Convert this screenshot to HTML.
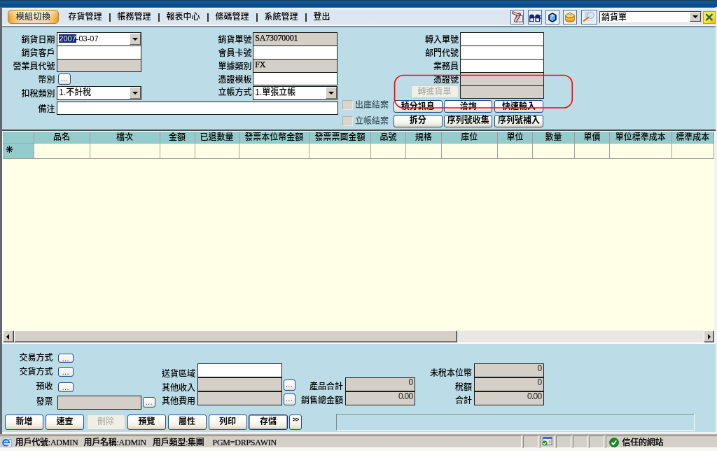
<!DOCTYPE html>
<html lang="zh-Hant">
<head>
<meta charset="utf-8">
<title>銷貨單</title>
<style>
html,body{margin:0;padding:0;}
body{width:717px;height:451px;overflow:hidden;background:#bcdde7;position:relative;}
#app{position:absolute;left:0;top:0;width:1024px;height:644px;transform:scale(0.7002);transform-origin:0 0;will-change:transform;
  font-family:"Liberation Sans","Noto Sans CJK TC",sans-serif;font-size:12px;color:#000;background:#bcdde7;overflow:hidden;font-weight:500;}
#app *{box-sizing:border-box;}
.abs{position:absolute;}
/* chrome */
#topbar{left:0;top:0;width:1024px;height:10.7px;background:linear-gradient(#1d3f5e 0,#1d3f5e 1.4px,#0a60aa 1.6px,#0a5698 4.5px,#0a4a86 7.5px,#0b4f8c 9.3px,#1a62a4 10.7px);}
#toolbar{left:0;top:10.7px;width:1024px;height:27.3px;background:linear-gradient(#f4f7fc 0,#eef3f9 1.6px,#dde7f1 3.2px,#dbe6f0 6px,#dce7f1 23.5px,#f2f6fa 25.2px,#f6f9fb 27.3px);}
#tbline{left:0;top:37.3px;width:1024px;height:1.8px;background:#768e98;}
#lborder{left:0;top:10px;width:2.5px;height:610px;background:#62666e;}
#rborder{left:1022.2px;top:10px;width:1.8px;height:610px;background:#eef0f0;}
.menu{top:17px;height:14px;line-height:14px;white-space:nowrap;}
.sep{top:16.5px;height:14px;line-height:14px;width:6px;text-align:center;font-weight:700;font-size:12.5px;}
#modbtn{left:11px;top:14.2px;width:73px;height:20.2px;border:1.3px solid #b4822e;border-radius:5px;
  background:linear-gradient(rgba(255,255,255,.35),rgba(255,255,255,0) 50%,rgba(160,110,30,.12)),linear-gradient(90deg,#f4a01a 0,#f8c468 10%,#f6e5c6 26%,#f6e5c6 74%,#f8c468 90%,#f4a01a 100%);
  text-align:center;line-height:18px;font-size:12px;letter-spacing:0.4px;color:#333;}
/* form */
.lbl{height:19px;line-height:19px;margin-top:1.5px;text-align:right;white-space:nowrap;}
.fld{height:20.6px;border:1.6px solid #1c1c1c;background:#fff;line-height:15px;padding-left:2px;white-space:nowrap;overflow:hidden;}
.ro{background:#d4d0c8;}
.num{text-align:right;padding-right:2.5px;font-size:12px;letter-spacing:-0.7px;line-height:13px;color:#111;}
.serif{font-family:"Liberation Serif","Noto Serif CJK SC",serif;font-size:12px;letter-spacing:-0.25px;-webkit-text-stroke:0.25px #000;}
.sel{height:20.6px;border:1.6px solid #1c1c1c;background:#fff;line-height:16px;padding-left:2px;white-space:nowrap;overflow:hidden;font-size:12px;}
.sel .dd{position:absolute;right:0;top:0;width:16.5px;height:17.5px;background:#d4d0c8;border:1px solid;border-color:#fff #606060 #606060 #fff;}
.sel .dd:after{content:"";position:absolute;left:3px;top:6px;border:4.2px solid transparent;border-top:4.6px solid #000;border-bottom:0;}
.dots{border:1.3px solid #1f508f;border-radius:3px;background:linear-gradient(#fff,#f1efe6 80%,#dcd8cc);text-align:center;line-height:12px;font-size:11px;letter-spacing:0.3px;color:#445;}
.btn{border:1.4px solid #1f508f;border-radius:3px;background:linear-gradient(#fff,#fbfaf4 45%,#f0ede0 78%,#d8d2c0);font-weight:700;text-align:center;white-space:nowrap;}
.btn.dis{color:#a8a8a0;border-color:#d0d0c4;background:#f0efe6;}
.chk{width:15.4px;height:14px;background:#d9d5cd;border:1.2px solid;border-color:#b4b0a8 #ece9e2 #ece9e2 #b4b0a8;}
.gray{color:#3c5560;}
/* grid */
#grid{left:2.5px;top:184.8px;width:1019.7px;height:304.5px;background:#ffffe8;border-top:2px solid #484848;}
.gh{top:188.4px;height:16.2px;background:#94cccb;line-height:16.5px;text-align:center;border-right:1px solid #a898a0;border-bottom:1px solid #86aeb0;white-space:nowrap;overflow:hidden;}
.gc{top:204.6px;height:22px;background:#ffffe8;border-right:1px solid #a4a49c;border-bottom:1.2px solid #9c9c96;}

.sbtn{background:#d4d0c8;border:1.3px solid;border-color:#fff #404040 #404040 #fff;box-shadow:inset -1px -1px 0 #8a8780;}
.sbtn i{position:absolute;top:3.2px;width:0;height:0;border-top:4px solid transparent;border-bottom:4px solid transparent;}
.bb{top:591.8px;width:55px;height:22px;line-height:19px;font-weight:700;}
.btn.dis{font-weight:400;}
.st{top:623.5px;height:16px;line-height:16px;white-space:nowrap;letter-spacing:-0.25px;-webkit-text-stroke:0.2px #000;font-family:"Liberation Serif","Noto Sans CJK TC",serif;}

.ibox{top:14.4px;width:19.8px;height:20.3px;border:1.3px solid #4476aa;background:#eaf1f9;}
.ibox svg{position:absolute;left:0;top:0;}
.pnl{top:621.8px;height:18px;border:1px solid;border-color:#8a8880 #fff #fff #8a8880;}
</style>
</head>
<body>
<div id="app">
  <div id="topbar" class="abs"></div>
  <div id="toolbar" class="abs"></div>
  <div id="tbline" class="abs"></div>
  <div id="modbtn" class="abs">模組切換</div>
  <div class="abs menu" style="left:97.5px">存貨管理</div>
  <div class="abs sep" style="left:154px">|</div>
  <div class="abs menu" style="left:167.5px">帳務管理</div>
  <div class="abs sep" style="left:224px">|</div>
  <div class="abs menu" style="left:237.5px">報表中心</div>
  <div class="abs sep" style="left:294px">|</div>
  <div class="abs menu" style="left:307.5px">條碼管理</div>
  <div class="abs sep" style="left:364px">|</div>
  <div class="abs menu" style="left:377.5px">系統管理</div>
  <div class="abs sep" style="left:434px">|</div>
  <div class="abs menu" style="left:447.5px">登出</div>

  <div class="abs ibox" style="left:728.5px"><svg viewBox="0 0 20 20" width="18" height="18"><rect x="8" y="8" width="10" height="10" fill="#fff" stroke="#4a4a4a" stroke-width="1.1"/><path d="M10.5 12h5M10.5 15h5" stroke="#8a8a8a" stroke-width="1"/><path d="M13.2 6 L7 16.4" stroke="#6a1c24" stroke-width="5" stroke-linecap="round"/><path d="M13.2 6 L7 16.4" stroke="#f4b4b8" stroke-width="3" stroke-linecap="round"/><path d="M3 3.5 L11.5 7" stroke="#6a1c24" stroke-width="4.2" stroke-linecap="round"/><path d="M3 3.5 L11.5 7" stroke="#f8dcdc" stroke-width="2.2" stroke-linecap="round"/></svg></div>
  <div class="abs ibox" style="left:753.8px"><svg viewBox="0 0 20 20" width="18" height="18"><path d="M1.2 18 V9.5 Q1.2 6 5 6 Q8.8 6 8.8 9.5 V18 Z" fill="#18207c"/><path d="M10.4 18 V9.5 Q10.4 6 14.2 6 Q18 6 18 9.5 V18 Z" fill="#18207c"/><rect x="2.8" y="12.6" width="4.4" height="4.2" fill="#fff"/><rect x="12" y="12.6" width="4.4" height="4.2" fill="#fff"/><rect x="1.2" y="9.6" width="17" height="1.8" fill="#18207c"/><path d="M17.5 8h3M17.5 10.5h3M17.5 13h3" stroke="#18207c" stroke-width="1"/></svg></div>
  <div class="abs ibox" style="left:778.8px"><svg viewBox="0 0 20 20" width="18" height="18"><path d="M10 4.4 L15.4 7.6 V14.6 L10 18 L4.6 14.6 V7.6 Z" fill="#48a6f4" stroke="#0c1838" stroke-width="2" stroke-linejoin="round"/><path d="M10 5.4 L14.4 8 L10 10.4 L5.6 8Z" fill="#9ad6ff"/><path d="M10 10.4 V16.8 L5.6 14 V8Z" fill="#6cc0fa"/></svg></div>
  <div class="abs ibox" style="left:804px"><svg viewBox="0 0 20 20" width="18" height="18"><path d="M3 8 V15 Q3 18 10 18 Q17 18 17 15 V8 Z" fill="#f0a010" stroke="#9a5a00" stroke-width="1"/><ellipse cx="10" cy="8" rx="7" ry="3.2" fill="#f8d870" stroke="#9a5a00" stroke-width="1"/><path d="M3 12 Q10 15.5 17 12" fill="none" stroke="#f8e090" stroke-width="1"/><circle cx="10" cy="5" r="2" fill="#c8d8a0" stroke="#666" stroke-width=".6"/></svg></div>
  <div class="abs ibox" style="left:830px;width:22.5px"><svg viewBox="0 0 22 20" width="20" height="18"><rect x="4" y="2" width="8" height="9" fill="#c8d4e8"/><circle cx="14" cy="7.5" r="5.2" fill="#cfe6fa" stroke="#a8b8d0" stroke-width="1.4"/><path d="M10 11 L3 16.5" stroke="#e87010" stroke-width="2.6" stroke-linecap="round"/><path d="M8 16h10" stroke="#d8d8e0" stroke-width="1.5"/></svg></div>
  <div class="abs" style="left:855.5px;top:15.7px;width:146px;height:17.2px;border:1.5px solid;border-color:#3a3a3a #dcdad4 #e4e2dc #3a3a3a;background:#fff;line-height:17px;padding-left:2.5px;font-size:12px;white-space:nowrap;overflow:hidden">銷貨單<span style="position:absolute;right:0;top:0;width:15.5px;height:14.4px;background:#d4d0c8;border:1px solid;border-color:#f4f4f0 #404040 #404040 #f4f4f0"></span><span style="position:absolute;right:3.4px;top:5px;border:4.2px solid transparent;border-top:4.5px solid #000;border-bottom:0"></span></div>
  <div class="abs" style="left:1004.2px;top:16.4px;width:17.8px;height:17.2px;background:linear-gradient(135deg,#fff040 0,#ffec20 55%,#f8b018 100%);border:1px solid #c89a28"><svg viewBox="0 0 16 15" width="15.8" height="15.2" style="position:absolute;left:0;top:0"><path d="M3.4 3 L12.6 12 M12.6 3 L3.4 12" stroke="#1c6870" stroke-width="2.4"/></svg></div>


  <!-- column 1 -->
  <div class="abs lbl" style="left:0;top:46px;width:78.5px">銷貨日期</div>
  <div class="abs sel" style="left:81.3px;top:45.5px;width:121.2px"><span style="font-size:11px"><span style="background:#0a246a;color:#fff">2007</span>-03-07</span><span class="dd"></span></div>
  <div class="abs lbl" style="left:0;top:65px;width:78.5px">銷貨客戶</div>
  <div class="abs fld" style="left:81.3px;top:64.5px;width:121.2px"></div>
  <div class="abs lbl" style="left:0;top:84px;width:78.5px">營業員代號</div>
  <div class="abs fld ro" style="left:81.3px;top:83.5px;width:121.2px;height:19.5px"></div>
  <div class="abs lbl" style="left:0;top:103px;width:78.5px">幣別</div>
  <div class="abs dots" style="left:83px;top:105px;width:18px;height:15.5px">...</div>
  <div class="abs lbl" style="left:0;top:123px;width:78.5px">扣稅類別</div>
  <div class="abs sel" style="left:81.3px;top:122.5px;width:121.2px;height:20px">1.不計稅<span class="dd"></span></div>
  <div class="abs lbl" style="left:0;top:145px;width:78.5px">備注</div>
  <div class="abs fld" style="left:81.3px;top:144.5px;width:401.5px;height:19.5px"></div>
  <!-- column 2 -->
  <div class="abs lbl" style="left:280px;top:46px;width:79.5px">銷貨單號</div>
  <div class="abs fld ro serif" style="left:361.3px;top:45.5px;width:121.2px">SA73070001</div>
  <div class="abs lbl" style="left:280px;top:65px;width:79.5px">會員卡號</div>
  <div class="abs fld" style="left:361.3px;top:64.5px;width:121.2px"></div>
  <div class="abs lbl" style="left:280px;top:84px;width:79.5px">單據類別</div>
  <div class="abs fld ro serif" style="left:361.3px;top:83.5px;width:121.2px">FX</div>
  <div class="abs lbl" style="left:280px;top:103px;width:79.5px">憑證模板</div>
  <div class="abs fld" style="left:361.3px;top:102.5px;width:121.2px;height:19.5px"></div>
  <div class="abs lbl" style="left:280px;top:121px;width:79.5px">立帳方式</div>
  <div class="abs sel" style="left:361.3px;top:122.5px;width:121.2px;height:20px">1.單張立帳<span class="dd"></span></div>
  <div class="abs chk" style="left:488.5px;top:142.8px"></div>
  <div class="abs lbl gray" style="left:507px;top:139.8px;text-align:left">出庫結案</div>
  <div class="abs chk" style="left:488.5px;top:165.8px"></div>
  <div class="abs lbl gray" style="left:507px;top:162.6px;text-align:left">立帳結案</div>
  <!-- column 3 -->
  <div class="abs lbl" style="left:575px;top:46px;width:80px">轉入單號</div>
  <div class="abs fld" style="left:657.2px;top:45.5px;width:119.5px"></div>
  <div class="abs lbl" style="left:575px;top:65px;width:80px">部門代號</div>
  <div class="abs fld" style="left:657.2px;top:64.5px;width:119.5px"></div>
  <div class="abs lbl" style="left:575px;top:84px;width:80px">業務員</div>
  <div class="abs fld" style="left:657.2px;top:83.5px;width:119.5px"></div>
  <div class="abs lbl" style="left:575px;top:103px;width:80px">憑證號</div>
  <div class="abs fld ro" style="left:657.2px;top:102.5px;width:119.5px"></div>
  <div class="abs btn dis" style="left:586.5px;top:121.5px;width:68px;height:18px;line-height:16px">轉進貨單</div>
  <div class="abs fld ro" style="left:657.2px;top:121.5px;width:119.5px;height:19px"></div>
  <div class="abs btn" style="left:561.8px;top:142.6px;width:70px;height:18px;line-height:16px">積分訊息</div>
  <div class="abs btn" style="left:634.3px;top:142.6px;width:68.7px;height:18px;line-height:16px">洽詢</div>
  <div class="abs btn" style="left:705.8px;top:142.6px;width:70.2px;height:18px;line-height:16px">快速輸入</div>
  <div class="abs btn" style="left:561.8px;top:164px;width:70px;height:17.5px;line-height:15.5px">拆分</div>
  <div class="abs btn" style="left:634.3px;top:164px;width:68.7px;height:17.5px;line-height:15.5px">序列號收集</div>
  <div class="abs btn" style="left:705.8px;top:164px;width:70.2px;height:17.5px;line-height:15.5px">序列號補入</div>
  <svg class="abs" style="left:558px;top:102px;overflow:visible" width="270" height="56"><rect x="5.6" y="5.5" width="253.7" height="46.5" rx="12.5" ry="12.5" fill="none" stroke="#f80a0a" stroke-width="1.7"/></svg>

  <div id="grid" class="abs"></div>
  <div class="abs" style="left:2.5px;top:186.8px;width:1019px;height:1.7px;background:#fff"></div>
  <div class="abs" style="left:2.8px;top:186.8px;width:1.4px;height:302px;background:#fff"></div>
  <div class="abs gh" style="left:4px;width:44.5px"></div>
  <div class="abs gc" style="left:4px;width:44.5px;background:#94cccb;line-height:18px;padding-left:3.5px;font-size:13px;font-weight:700">✳</div>
  <div class="abs gh" style="left:48.5px;width:80px">品名</div>
  <div class="abs gc" style="left:48.5px;width:80px"></div>
  <div class="abs gh" style="left:128.5px;width:100px">檔次</div>
  <div class="abs gc" style="left:128.5px;width:100px"></div>
  <div class="abs gh" style="left:228.5px;width:50px">金額</div>
  <div class="abs gc" style="left:228.5px;width:50px"></div>
  <div class="abs gh" style="left:278.5px;width:63px">已退數量</div>
  <div class="abs gc" style="left:278.5px;width:63px"></div>
  <div class="abs gh" style="left:341.5px;width:100.5px">發票本位幣金額</div>
  <div class="abs gc" style="left:341.5px;width:100.5px"></div>
  <div class="abs gh" style="left:442.0px;width:88px">發票票面金額</div>
  <div class="abs gc" style="left:442.0px;width:88px"></div>
  <div class="abs gh" style="left:530.0px;width:50px">品號</div>
  <div class="abs gc" style="left:530.0px;width:50px"></div>
  <div class="abs gh" style="left:580.0px;width:50.5px">規格</div>
  <div class="abs gc" style="left:580.0px;width:50.5px"></div>
  <div class="abs gh" style="left:630.5px;width:80.5px">庫位</div>
  <div class="abs gc" style="left:630.5px;width:80.5px"></div>
  <div class="abs gh" style="left:711.0px;width:50px">單位</div>
  <div class="abs gc" style="left:711.0px;width:50px"></div>
  <div class="abs gh" style="left:761.0px;width:60px">數量</div>
  <div class="abs gc" style="left:761.0px;width:60px"></div>
  <div class="abs gh" style="left:821.0px;width:50px">單價</div>
  <div class="abs gc" style="left:821.0px;width:50px"></div>
  <div class="abs gh" style="left:871.0px;width:88.5px">單位標準成本</div>
  <div class="abs gc" style="left:871.0px;width:88.5px"></div>
  <div class="abs gh" style="left:959.5px;width:60.5px">標準成本</div>
  <div class="abs gc" style="left:959.5px;width:60.5px"></div>
  <!-- scrollbar -->
  <div class="abs" style="left:4px;top:472.4px;width:1016px;height:16.8px;background:#e9e7e2"></div>
  <div class="abs sbtn" style="left:4.2px;top:472.4px;width:15.5px;height:16.8px"><i style="border-right:4.8px solid #000;left:3.6px"></i></div>
  <div class="abs sbtn" style="left:19.7px;top:472.4px;width:633.8px;height:16.8px"></div>
  <div class="abs sbtn" style="left:1005.2px;top:472.4px;width:14.6px;height:16.8px"><i style="border-left:4.8px solid #000;left:5px"></i></div>
  <div class="abs" style="left:2.5px;top:489.1px;width:1020px;height:2px;background:#fbfcfc"></div>
  <div class="abs" style="left:1019.6px;top:186.8px;width:3px;height:304px;background:#f4f4f2"></div>


  <div class="abs lbl" style="left:0;top:500.5px;width:75.5px">交易方式</div>
  <div class="abs dots" style="left:83px;top:504.5px;width:21.5px;height:13.6px">...</div>
  <div class="abs lbl" style="left:0;top:520.5px;width:75.5px">交貨方式</div>
  <div class="abs dots" style="left:83px;top:524px;width:21.5px;height:13.6px">...</div>
  <div class="abs lbl" style="left:0;top:541.5px;width:75.5px">預收</div>
  <div class="abs dots" style="left:83px;top:546px;width:21.5px;height:13.6px">...</div>
  <div class="abs lbl" style="left:0;top:563.5px;width:75.5px">發票</div>
  <div class="abs fld ro" style="left:82px;top:564.5px;width:120px"></div>
  <div class="abs dots" style="left:204px;top:566.5px;width:17.5px;height:15.5px">...</div>

  <div class="abs lbl" style="left:200px;top:523px;width:79px">送貨區域</div>
  <div class="abs fld" style="left:281.5px;top:519px;width:121.5px;height:20px"></div>
  <div class="abs lbl" style="left:200px;top:543px;width:79px">其他收入</div>
  <div class="abs fld ro" style="left:281.5px;top:539px;width:121.5px;height:20px"></div>
  <div class="abs dots" style="left:404.5px;top:541.5px;width:17px;height:16.5px">...</div>
  <div class="abs lbl" style="left:200px;top:562.5px;width:79px">其他費用</div>
  <div class="abs fld ro" style="left:281.5px;top:559px;width:121.5px;height:20px"></div>
  <div class="abs dots" style="left:404.5px;top:562px;width:17px;height:17px">...</div>

  <div class="abs lbl" style="left:410px;top:541px;width:80px">產品合計</div>
  <div class="abs fld ro num" style="left:493px;top:539px;width:100px;height:20px">0</div>
  <div class="abs lbl" style="left:410px;top:561.5px;width:80px">銷售總金額</div>
  <div class="abs fld ro num" style="left:493px;top:559px;width:100px;height:20px">0.00</div>

  <div class="abs lbl" style="left:594px;top:522px;width:80px">未稅本位幣</div>
  <div class="abs fld ro num" style="left:677px;top:519px;width:100px;height:20px">0</div>
  <div class="abs lbl" style="left:594px;top:542px;width:80px">稅額</div>
  <div class="abs fld ro num" style="left:677px;top:539px;width:100px;height:20px">0</div>
  <div class="abs lbl" style="left:594px;top:561px;width:80px">合計</div>
  <div class="abs fld ro num" style="left:677px;top:559px;width:100px;height:20px">0.00</div>

  <div class="abs btn bb" style="left:7px">新增</div>
  <div class="abs btn bb" style="left:65px">速查</div>
  <div class="abs btn bb dis" style="left:123.5px">刪除</div>
  <div class="abs btn bb" style="left:182px">預覽</div>
  <div class="abs btn bb" style="left:239.5px">屬性</div>
  <div class="abs btn bb" style="left:297.5px">列印</div>
  <div class="abs btn bb" style="left:355px;width:56px;border-color:#1a2a4a;box-shadow:inset 0 0 0 1px #8aa6d0">存儲</div>
  <div class="abs btn bb" style="left:412.8px;width:18.5px;font-size:9px;line-height:12px;letter-spacing:-1px">&gt;&gt;</div>
  <div class="abs" style="left:480px;top:590.5px;width:512px;height:24px;border:1.3px solid;border-color:#7d8c8c #f4fafa #f4fafa #7d8c8c"></div>


  <div class="abs" style="left:0;top:617px;width:1024px;height:27px;background:#d4d0c8"></div>
  <div class="abs" style="left:0;top:616.6px;width:1024px;height:3.4px;background:linear-gradient(#f4f6f6,#ecebe6)"></div>
  <div class="abs" style="left:0;top:620px;width:1024px;height:1.6px;background:#b4b1aa"></div>
  <div class="abs" style="left:0;top:639.6px;width:1024px;height:4.4px;background:#f8f7f4"></div>
  <div class="abs pnl" style="left:0;width:744.5px;border-left:0"></div>
  <div class="abs pnl" style="left:746.5px;width:22px"></div>
  <div class="abs pnl" style="left:770.5px;width:21.5px"></div>
  <div class="abs pnl" style="left:793.5px;width:22px"></div>
  <div class="abs pnl" style="left:817.5px;width:22px"></div>
  <div class="abs pnl" style="left:841.2px;width:22px"></div>
  <div class="abs pnl" style="left:865.3px;width:160px"></div>
  <svg class="abs" style="left:2px;top:624px" width="16" height="15" viewBox="0 0 16 15"><path d="M3 .5h8l3.5 3.5v10.5H3z" fill="#dfeaf8" stroke="#8aa4cc" stroke-width=".8"/><circle cx="6.6" cy="8.2" r="4.3" fill="none" stroke="#1c6ad8" stroke-width="2.2"/><rect x="3" y="7.4" width="8" height="1.6" fill="#1c6ad8"/><rect x="8" y="9" width="4" height="2.4" fill="#dfeaf8"/><path d="M1 11.5 Q7 3 13.5 3.5" fill="none" stroke="#38a0f0" stroke-width="1"/></svg>
  <svg class="abs" style="left:772.5px;top:624.3px" width="16" height="14" viewBox="0 0 16 14"><rect x="2.5" y=".5" width="12.5" height="10.5" fill="#fff" stroke="#3a6ad0" stroke-width="1"/><rect x="2.5" y=".5" width="12.5" height="2.6" fill="#3a6ad0"/><rect x="10.5" y="4.5" width="3" height="5" fill="#f0b020"/><circle cx="5" cy="9" r="4" fill="#1c8a2c" stroke="#e8f0e8" stroke-width=".6"/><path d="M3 9 l1.6 1.7 l2.6 -3.4" fill="none" stroke="#fff" stroke-width="1.3"/></svg>
  <svg class="abs" style="left:869.5px;top:625.3px" width="14" height="14" viewBox="0 0 14 14"><circle cx="7" cy="7" r="6.4" fill="#168a24" stroke="#0c5a14" stroke-width=".8"/><path d="M3.6 7.2 l2.4 2.6 l4.2 -5.6" fill="none" stroke="#fff" stroke-width="1.9"/></svg>
  <div class="abs st" style="left:21.8px">用戶代號:ADMIN</div>
  <div class="abs st" style="left:119.5px">用戶名稱:ADMIN</div>
  <div class="abs st" style="left:218px">用戶類型:集團</div>
  <div class="abs st" style="left:303.5px">PGM=DRPSAWIN</div>
  <div class="abs st" style="left:888.5px;font-family:'Liberation Sans','Noto Sans CJK TC',sans-serif">信任的網站</div>

  <div id="lborder" class="abs"></div>
  <div id="rborder" class="abs"></div>
</div>
</body>
</html>
